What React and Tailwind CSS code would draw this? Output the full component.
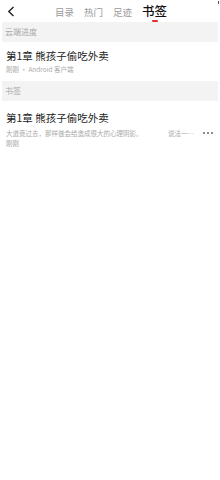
import { useState } from 'react';

const tabs = ['目录', '热门', '足迹', '书签'];

export default function App() {
  const [active, setActive] = useState('书签');

  return (
    <div className="w-[220px] h-[480px] bg-white overflow-hidden relative" style={{ fontFamily: '"Noto Sans CJK SC", "Noto Sans", sans-serif' }}>
      {/* 顶部导航 */}
      <div className="h-[22px] flex items-center relative">
        <button className="w-[20px] h-[22px] flex items-center justify-center pl-[2px]">
          <svg width="8" height="11" viewBox="0 0 8 11" fill="none">
            <path d="M6.5 1L1.8 5.5L6.5 10" stroke="#222" strokeWidth="1.4" />
          </svg>
        </button>
        <div className="flex items-end ml-[35px] gap-[10px]">
          {tabs.map((t) => (
            <button
              key={t}
              onClick={() => setActive(t)}
              className={
                t === active
                  ? 'relative text-[12.5px] leading-[16px] text-[#111] font-medium'
                  : 'text-[9.5px] leading-[14px] text-[#999]'
              }
            >
              {t}
              {t === active && (
                <span className="absolute left-1/2 -translate-x-1/2 top-[17px] w-[6px] h-[2px] bg-[#e0303a] rounded-full" />
              )}
            </button>
          ))}
        </div>
        <span className="absolute right-[1px] top-[1px] w-[1px] h-[3px] bg-[#555]" />
      </div>

      {/* 云端进度 */}
      <div className="mx-[2px] h-[20px] bg-[#f3f3f3] flex items-center px-[3px] text-[8px] text-[#aaa]">
        云端进度
      </div>
      <div className="px-[6px] pt-[7px] pb-[7px]">
        <div className="text-[10.5px] leading-[14px] text-[#222]">第1章 熊孩子偷吃外卖</div>
        <div className="mt-[1px] text-[6.5px] leading-[10px] text-[#aaa]">刚刚 · Android 客户端</div>
      </div>

      {/* 书签 */}
      <div className="mx-[2px] h-[20px] bg-[#f3f3f3] flex items-center px-[3px] text-[8px] text-[#aaa]">
        书签
      </div>
      <div className="px-[6px] pt-[10px]">
        <div className="text-[10.5px] leading-[14px] text-[#222]">第1章 熊孩子偷吃外卖</div>
        <div className="flex items-center mt-[3px] text-[6.5px] leading-[10px] text-[#aaa] whitespace-nowrap">
          <span className="w-[148px] overflow-hidden">大道竟过去，那样做会给造成很大的心理阴影。</span>
          <span className="ml-[14px]">说法一…</span>
          <span className="ml-auto mr-[1px] flex gap-[2px]">
            <span className="w-[2px] h-[2px] rounded-full bg-[#666]" />
            <span className="w-[2px] h-[2px] rounded-full bg-[#666]" />
            <span className="w-[2px] h-[2px] rounded-full bg-[#666]" />
          </span>
        </div>
        <div className="text-[6.5px] leading-[10px] text-[#aaa]">刚刚</div>
      </div>
    </div>
  );
}
